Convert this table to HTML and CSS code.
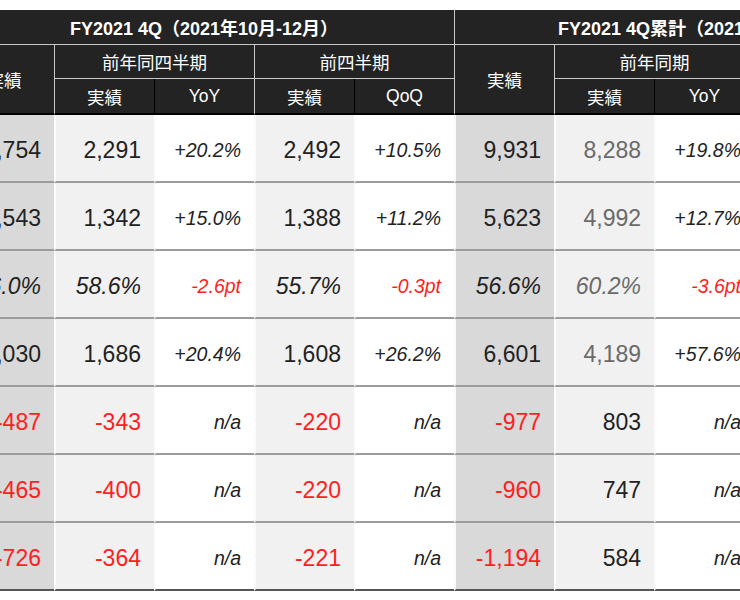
FILE: index.html
```html
<!DOCTYPE html>
<html lang="ja">
<head>
<meta charset="utf-8">
<title>FY2021 4Q</title>
<link rel="stylesheet" href="styles.css">
</head>
<body>
<div class="sheet">
<table class="kpi">
<colgroup>
<col class="c"><col class="c"><col class="c"><col class="c"><col class="c"><col class="c"><col class="c"><col class="c">
</colgroup>
<thead>
<tr class="h1">
<th colspan="5" class="grp">FY2021 4Q（2021年10月-12月）</th>
<th colspan="3" class="grp grp-cum sep">FY2021 4Q累計（2021年1月-12月）</th>
</tr>
<tr class="h2">
<th rowspan="2" class="span2">実績</th>
<th colspan="2" class="sep">前年同四半期</th>
<th colspan="2" class="sep">前四半期</th>
<th rowspan="2" class="span2 sep">実績</th>
<th colspan="2" class="sep">前年同期</th>
</tr>
<tr class="h3">
<th class="sep">実績</th><th class="sub">YoY</th>
<th class="sep">実績</th><th class="sub">QoQ</th>
<th class="sep">実績</th><th class="sub">YoY</th>
</tr>
</thead>
<tbody>
<tr>
<td class="dk">2,754</td><td class="lt">2,291</td><td class="rt">+20.2%</td><td class="lt">2,492</td><td class="rt">+10.5%</td><td class="dk">9,931</td><td class="lt gray">8,288</td><td class="rt">+19.8%</td>
</tr>
<tr>
<td class="dk">1,543</td><td class="lt">1,342</td><td class="rt">+15.0%</td><td class="lt">1,388</td><td class="rt">+11.2%</td><td class="dk">5,623</td><td class="lt gray">4,992</td><td class="rt">+12.7%</td>
</tr>
<tr>
<td class="dk it">56.0%</td><td class="lt it">58.6%</td><td class="rt neg">-2.6pt</td><td class="lt it">55.7%</td><td class="rt neg">-0.3pt</td><td class="dk it">56.6%</td><td class="lt it gray">60.2%</td><td class="rt neg">-3.6pt</td>
</tr>
<tr>
<td class="dk">2,030</td><td class="lt">1,686</td><td class="rt">+20.4%</td><td class="lt">1,608</td><td class="rt">+26.2%</td><td class="dk">6,601</td><td class="lt gray">4,189</td><td class="rt">+57.6%</td>
</tr>
<tr>
<td class="dk neg">-487</td><td class="lt neg">-343</td><td class="rt">n/a</td><td class="lt neg">-220</td><td class="rt">n/a</td><td class="dk neg">-977</td><td class="lt">803</td><td class="rt">n/a</td>
</tr>
<tr>
<td class="dk neg">-465</td><td class="lt neg">-400</td><td class="rt">n/a</td><td class="lt neg">-220</td><td class="rt">n/a</td><td class="dk neg">-960</td><td class="lt">747</td><td class="rt">n/a</td>
</tr>
<tr class="last">
<td class="dk neg">-726</td><td class="lt neg">-364</td><td class="rt">n/a</td><td class="lt neg">-221</td><td class="rt">n/a</td><td class="dk neg">-1,194</td><td class="lt">584</td><td class="rt">n/a</td>
</tr>
</tbody>
</table>
</div>
</body>
</html>
```
FILE: styles.css
```css
html, body {
  margin: 0;
  padding: 0;
  background: #ffffff;
  overflow: hidden;
}

.sheet {
  padding-top: 10px;
  width: 740px;
  height: 600px;
  overflow: hidden;
}

.kpi {
  margin-left: -46px;
  width: 800px;
  table-layout: fixed;
  border-collapse: separate;
  border-spacing: 0;
  font-family: "Liberation Sans", Arial, "Noto Sans CJK JP", sans-serif;
  color: #222222;
}

.kpi col.c {
  width: 100px;
}

.kpi th {
  box-sizing: border-box;
  background: #232323;
  color: #ffffff;
  font-weight: normal;
  font-size: 17.5px;
  text-align: center;
  vertical-align: middle;
  padding: 0;
  white-space: nowrap;
  overflow: hidden;
}

.kpi th.sep {
  border-left: 1px solid #c9c9c9;
}

.kpi th.sub {
  border-left: 1px solid #000000;
}

.kpi .h1 th {
  height: 35px;
  font-size: 18px;
  font-weight: bold;
  border-bottom: 1px solid #c9c9c9;
}

.kpi .h1 th.grp-cum {
  text-align: left;
  padding-left: 103px;
}

.kpi .h2 th {
  height: 34px;
  border-bottom: 1px solid #c9c9c9;
}

.kpi .h2 th.span2,
.kpi .h3 th {
  border-bottom: 2px solid #000000;
}

.kpi .h3 th {
  height: 36px;
}

.kpi td {
  box-sizing: border-box;
  height: 68px;
  padding: 4px 13px 0 0;
  text-align: right;
  vertical-align: middle;
  font-size: 23px;
  border-left: 2px solid #fbfbfb;
  border-bottom: 2px solid #9c9c9c;
  white-space: nowrap;
}

.kpi tr.last td {
  border-bottom: 2px solid #555555;
}

.kpi td.dk {
  background: #d9d9d9;
}

.kpi td.lt {
  background: #f1f1f1;
}

.kpi td.rt {
  background: #ffffff;
  font-style: italic;
  font-size: 19.5px;
}

.kpi td.it {
  font-style: italic;
}

.kpi td.gray {
  color: #6a6a6a;
}

.kpi td.neg {
  color: #ff1e1e;
}
```
